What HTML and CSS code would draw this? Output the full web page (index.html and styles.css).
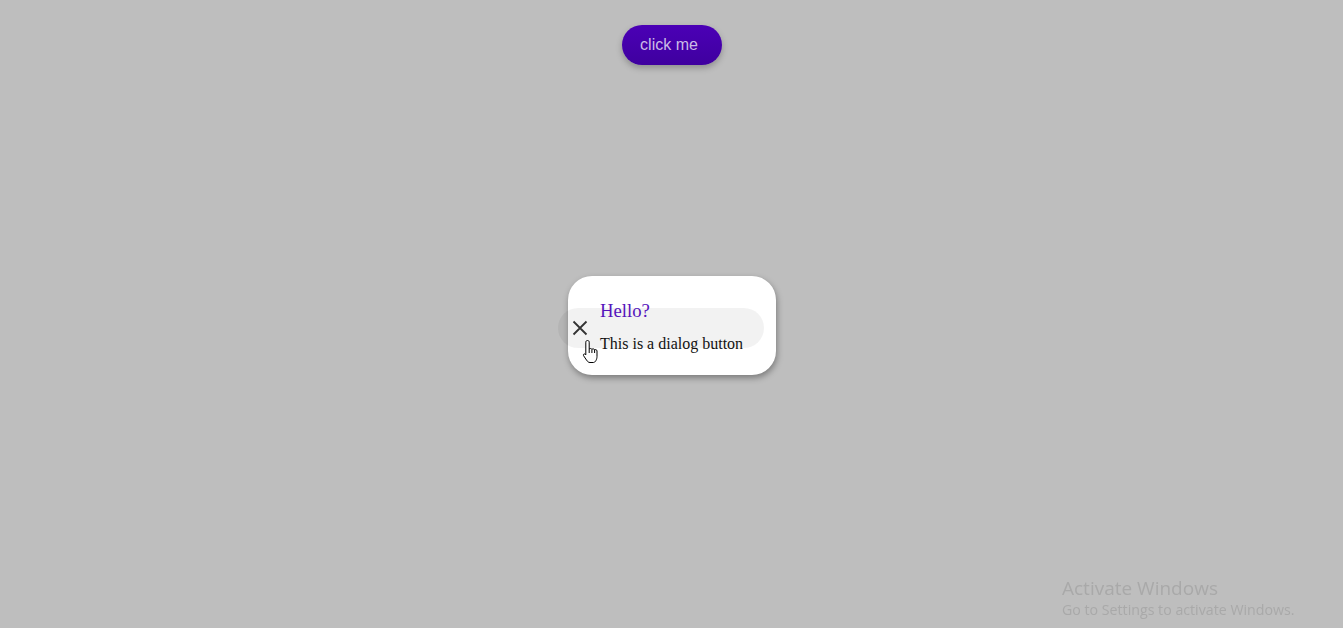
FILE: index.html
```html
<!DOCTYPE html>
<html>
<head>
<meta charset="utf-8">
<link rel="stylesheet" href="styles.css">
</head>
<body>
<main class="page">
  <button class="open-btn">click me</button>
  <div class="dialog">
    <button class="close-btn" aria-label="close">
      <svg class="close-icon" width="16" height="16" viewBox="0 0 16 16"><path d="M1.5 1.5 L14.5 14.5 M14.5 1.5 L1.5 14.5" stroke="#333" stroke-width="1.8" fill="none"/></svg>
    </button>
    <div class="dialog-body">
      <div class="dialog-title">Hello?</div>
      <div class="dialog-text">This is a dialog button</div>
    </div>
    <svg class="cursor" width="18" height="26" viewBox="0 0 18 26"><path d="M5.5 1.5 C6.6 1.5 7.2 2.2 7.2 3.2 L7.2 10 C7.6 9.3 9.6 9.2 9.9 10.4 C10.4 9.6 12.3 9.6 12.6 10.9 C13.2 10.3 15 10.5 15 12 L15 17.5 C15 20.5 13.2 23.5 11.5 23.5 L8 23.5 C6.5 23.5 5.6 22.6 4.6 21.2 L1.5 16.6 C0.9 15.6 2.1 14.4 3.2 15.2 L3.8 15.9 L3.8 3.2 C3.8 2.2 4.4 1.5 5.5 1.5 Z M7.2 10 L7.2 14 M9.9 10.4 L9.9 14 M12.6 10.9 L12.6 14" fill="#fff" stroke="#000" stroke-width="1" stroke-linejoin="round"/></svg>
  </div>
</main>
<div class="watermark">
  <div class="wm-title">Activate Windows</div>
  <div class="wm-sub">Go to Settings to activate Windows.</div>
</div>
</body>
</html>
```

FILE: styles.css
```css
html, body {
  margin: 0;
  padding: 0;
  height: 100%;
  background: #bebebe;
  overflow: hidden;
}
.page {
  display: flex;
  flex-direction: column;
  align-items: center;
  padding-top: 25px;
  padding-left: 1px;
}
.open-btn {
  width: 100px;
  height: 40px;
  border: none;
  border-radius: 20px;
  background: linear-gradient(#4b00b6, #3f009f);
  color: #cbbce6;
  font-family: "Liberation Sans", Arial, sans-serif;
  font-size: 16px;
  padding: 0 6px 0 0;
  box-shadow: 0 3px 6px rgba(0,0,0,0.25);
  cursor: pointer;
}
.dialog {
  position: relative;
  margin-top: 211px;
  width: 208px;
  height: 99px;
  box-sizing: border-box;
  background: #fff;
  border-radius: 24px;
  box-shadow: 1px 3px 6px rgba(0,0,0,0.35);
  padding: 24px 0 0 32px;
}
.close-btn {
  position: absolute;
  left: -10px;
  top: 32px;
  width: 206px;
  height: 40px;
  border: none;
  border-radius: 20px;
  background: rgba(0,0,0,0.05);
  padding: 0 0 0 14px;
  display: flex;
  align-items: center;
  justify-content: flex-start;
}
.close-icon {
  display: block;
}
.dialog-body {
  position: relative;
  font-family: "Liberation Serif", "Times New Roman", serif;
}
.dialog-title {
  color: #5614bc;
  font-size: 18.72px;
  line-height: 22px;
}
.dialog-text {
  color: #111;
  font-size: 16px;
  line-height: 18px;
  margin-top: 13px;
}
.cursor {
  position: absolute;
  left: 14px;
  top: 63px;
}
.watermark {
  position: fixed;
  left: 1062px;
  top: 576px;
  font-family: "Open Sans", "Noto Sans", sans-serif;
  color: #a9a9a9;
}
.wm-title {
  font-size: 19px;
  line-height: 24px;
}
.wm-sub {
  font-size: 14.2px;
  line-height: 20px;
}
```
